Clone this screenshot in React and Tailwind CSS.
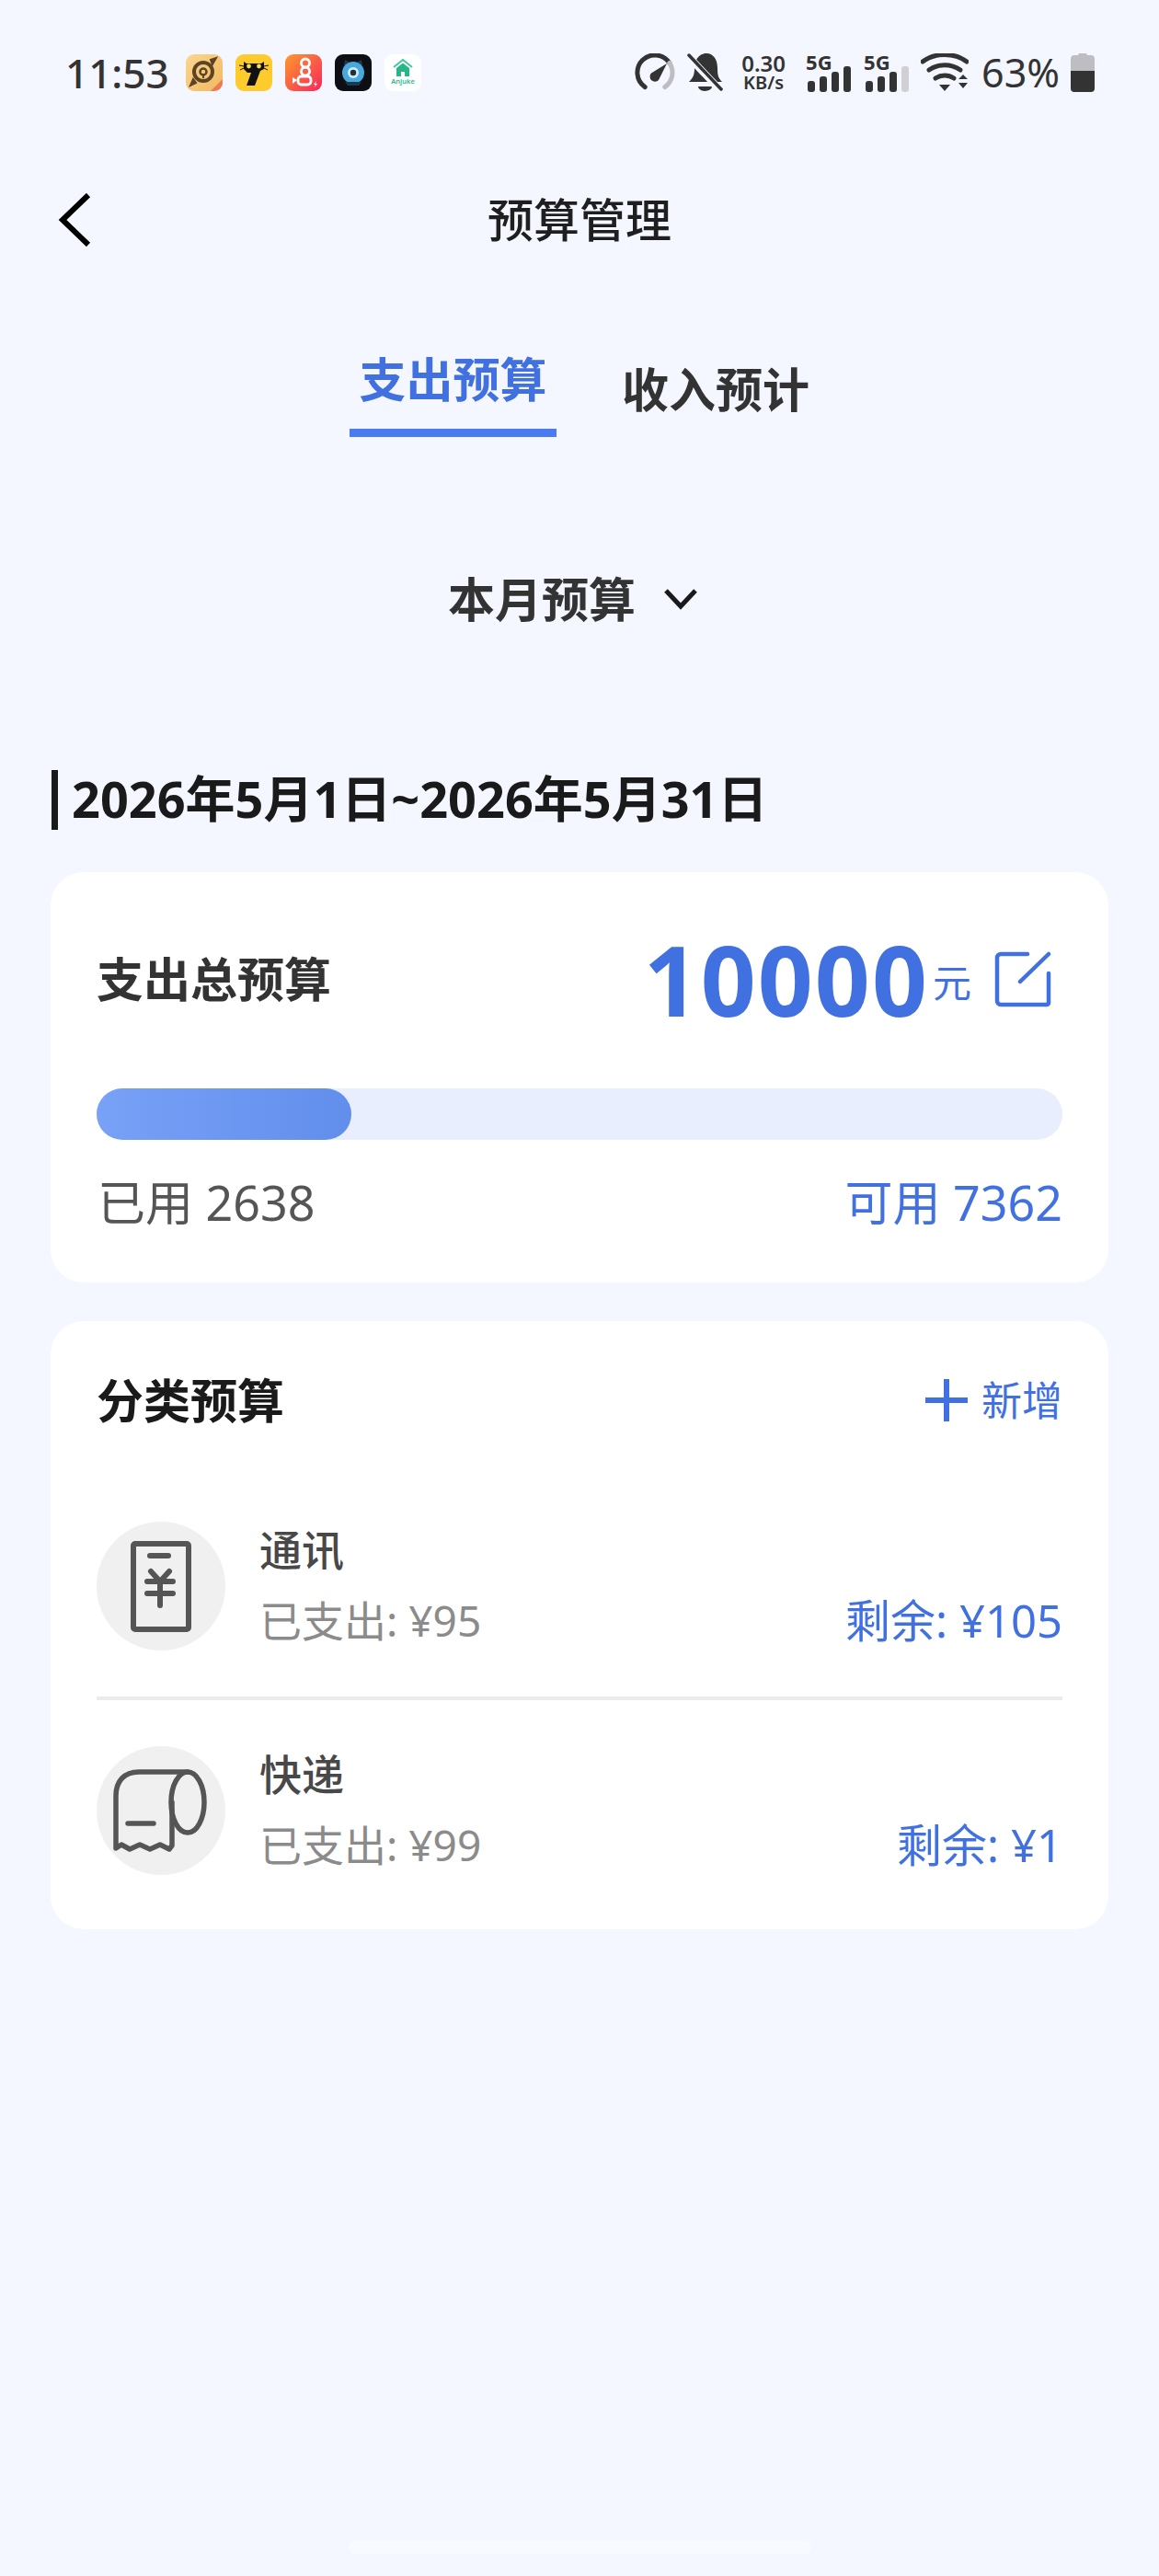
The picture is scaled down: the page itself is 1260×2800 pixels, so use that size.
const BLUE = "#4170e0";

function AppIcons() {
  return (
    <div className="flex items-center gap-[14px]">
      <svg width="40" height="40" viewBox="0 0 40 40">
        <defs>
          <linearGradient id="g1" x1="0" y1="0" x2="1" y2="1">
            <stop offset="0" stopColor="#fbd78f" />
            <stop offset="1" stopColor="#f2b75f" />
          </linearGradient>
        </defs>
        <rect width="40" height="40" rx="9" fill="url(#g1)" />
        <circle cx="19" cy="19" r="10" fill="none" stroke="#5b4526" strokeWidth="4" />
        <circle cx="19" cy="19" r="3.5" fill="none" stroke="#5b4526" strokeWidth="2.5" />
        <path d="M19 21v5M27 6l6-2-4 7zM11 31l-6 3 3-7z" stroke="#5b4526" strokeWidth="2" fill="#5b4526" />
        <path d="M40 27v4a9 9 0 0 1-9 9h-4z" fill="#ee7a55" />
      </svg>
      <svg width="40" height="40" viewBox="0 0 40 40">
        <rect width="40" height="40" rx="9" fill="#fdcb2c" />
        <path d="M9 8l3 2h16l3-2v8l-4 2-6 16h-9l5-14H13l-4-4z" fill="#111" />
        <path d="M9 13L4 12M9 15l-4 2M31 13l5-1M31 15l4 2" stroke="#111" strokeWidth="1" />
        <circle cx="14.500" cy="13" r="2.400" fill="#f7dc5a" />
        <circle cx="25.500" cy="13" r="2.400" fill="#f7dc5a" />
      </svg>
      <svg width="40" height="40" viewBox="0 0 40 40">
        <defs>
          <linearGradient id="g3" x1="0" y1="0" x2="1" y2="1">
            <stop offset="0" stopColor="#fb9a2c" />
            <stop offset="1" stopColor="#f8265c" />
          </linearGradient>
        </defs>
        <rect width="40" height="40" rx="9" fill="url(#g3)" />
        <circle cx="22" cy="9.500" r="4.500" fill="none" stroke="#fff" strokeWidth="2.800" />
        <circle cx="22" cy="18.500" r="4.500" fill="none" stroke="#fff" strokeWidth="2.800" />
        <rect x="14" y="24" width="14" height="9" rx="3.500" fill="none" stroke="#fff" strokeWidth="2.800" />
        <path d="M13 28l-5-3v7z" fill="#fff" />
        <path d="M34 29l-3 4h2l-1 3 3-4h-2z" fill="#fff" />
      </svg>
      <svg width="40" height="40" viewBox="0 0 40 40">
        <rect width="40" height="40" rx="9" fill="#0d0f14" />
        <path d="M10 12l1-6 6 3h6l6-3 1 6z" fill="#1d3a4c" />
        <circle cx="20" cy="20" r="12" fill="#47a9dc" />
        <circle cx="20" cy="20" r="6" fill="#d2ecf7" />
        <circle cx="20" cy="20" r="3.200" fill="#1c2f3d" />
        <path d="M11 30h18l-3 4H14z" fill="#1d3a4c" />
      </svg>
      <div className="w-[40px] h-[40px] rounded-[9px] bg-white flex flex-col items-center pt-[5px]">
        <svg width="22" height="20" viewBox="0 0 22 20">
          <path d="M1 9l10-8 10 8" fill="none" stroke="#3ecb9a" strokeWidth="2" />
          <path d="M4 10l7-5.500 7 5.500v9h-5v-5h-4v5H4z" fill="#25b886" />
        </svg>
        <span className="text-[7.5px] leading-[9px] font-semibold text-[#2bb98a]">Anjuke</span>
      </div>
    </div>
  );
}

function StatusIcons() {
  return (
    <div className="flex items-center text-[#333]">
      <svg width="48" height="42" viewBox="0 0 48 42" fill="none" strokeLinecap="round">
        <path d="M13.200 36.600A19 19 0 1 1 39.800 10.500" stroke="#333" strokeWidth="5" />
        <path d="M39.800 10.500A19 19 0 0 1 34.800 36.600" stroke="#bdbdc2" strokeWidth="5" />
        <path d="M20 21.500L37 11 28 29a5.200 5.200 0 1 1-8-7.500z" fill="#333" />
      </svg>
      <svg className="ml-[11px]" width="40" height="42" viewBox="0 0 40 42">
        <path d="M2 31c4-4 6-7 6-15C8 6 14 0 21 0s12 6 12 16c0 8 1 11 5 15z" fill="#333" />
        <path d="M12 36h15a7.500 5 0 0 1-15 0z" fill="#333" />
        <path d="M1 3l36 38" stroke="#f4f7ff" strokeWidth="8" />
        <path d="M2 2l35 37" stroke="#333" strokeWidth="3.500" strokeLinecap="round" />
      </svg>
      <div className="ml-[16px] w-[54px] flex flex-col items-center font-semibold">
        <span className="text-[24px] leading-[22px]">0.30</span>
        <span className="text-[20px] leading-[20px]">KB/s</span>
      </div>
      <Signal className="ml-[19px]" level={4} />
      <Signal className="ml-[13px]" level={3} />
      <svg className="ml-[12px]" width="52" height="42" viewBox="0 0 52 42" fill="none" stroke="#333" strokeLinecap="round">
        <path d="M2 9C15-1 37-1 50 9" strokeWidth="5" />
        <path d="M9 18c10-7 24-7 34 0" strokeWidth="5" />
        <path d="M16 27c6-4 14-4 20 0" strokeWidth="5" />
        <path d="M20 34h12l-6 7z" fill="#333" stroke="none" />
        <path d="M41 28l5-5 5 5zM41 32h10l-5 6z" fill="#333" stroke="none" />
      </svg>
      <span className="ml-[14px] text-[43px] leading-[42px]">63%</span>
      <div className="ml-[12px] w-[26px] h-[42px] flex flex-col items-center">
        <div className="w-[10px] h-[2px] bg-[#bdbdc2] rounded-t-sm" />
        <div className="w-[26px] h-[17px] bg-[#bdbdc2] rounded-t-[4px]" />
        <div className="w-[26px] h-[23px] bg-[#333] rounded-b-[4px]" />
      </div>
    </div>
  );
}

function Signal({ level, className }) {
  const bars = [12, 17, 22, 28];
  return (
    <div className={`relative w-[50px] h-[42px] pl-[2px] flex items-end gap-[5px] ${className}`}>
      <span className="absolute left-0 top-[-3px] text-[22px] leading-[24px] font-bold">5G</span>
      {bars.map((h, i) => (
        <div
          key={i}
          className={`w-[8px] rounded-[3px] ${i < level ? "bg-[#333]" : "bg-[#d0d0d4]"}`}
          style={{ height: h }}
        />
      ))}
    </div>
  );
}

function PhoneBillIcon() {
  return (
    <svg width="66" height="99" viewBox="0 0 66 99" fill="none" stroke="#555" strokeWidth="6" strokeLinecap="round" strokeLinejoin="round">
      <rect x="3" y="3" width="60" height="93" rx="2" />
      <path d="M21 16h20M22 33l10 11 10-11M18 44h28M18 57h28M32 44v26" />
    </svg>
  );
}

function RollIcon() {
  return (
    <svg width="104" height="92" viewBox="0 0 104 92" fill="none" stroke="#555" strokeWidth="5.500" strokeLinecap="round" strokeLinejoin="round">
      <ellipse cx="81" cy="37" rx="18" ry="33" />
      <path d="M81 4H28C12 4 3 14 3 30v57l6-4 9 5 11-5 11 5 11-5 10 5 3-4V37" />
      <path d="M16 60h28" />
    </svg>
  );
}

function CategoryRow({ icon, name, spent, left }) {
  return (
    <div className="flex items-center h-[140px]">
      <div className="w-[140px] h-[140px] rounded-full bg-[#f0f0f0] flex items-center justify-center">{icon}</div>
      <div className="ml-[37px] -mt-[3px] flex-1 flex flex-col">
        <span className="text-[46px] leading-[60px] font-medium text-[#484848]">{name}</span>
        <div className="flex justify-between items-center mt-[17px] leading-[60px]">
          <span className="text-[46px] text-[#8b8b8b]">已支出: {spent}</span>
          <span className="text-[49px]" style={{ color: BLUE }}>剩余: {left}</span>
        </div>
      </div>
    </div>
  );
}

export default function App() {
  return (
    <div className="w-[1260px] h-[2800px] bg-[#f4f7ff] font-['Noto_Sans','Noto_Sans_CJK_SC',sans-serif] flex flex-col overflow-hidden">
      {/* status bar */}
      <div className="flex items-center justify-between h-[42px] mt-[58px] pl-[71px] pr-[70px]">
        <div className="flex items-center">
          <span className="w-[131px] text-[44px] leading-[42px] font-medium text-[#333]">11:53</span>
          <AppIcons />
        </div>
        <StatusIcons />
      </div>

      {/* title */}
      <div className="grid grid-cols-[1fr_auto_1fr] items-center mt-[110px] pl-[63px] h-[58px]">
        <svg width="36" height="58" viewBox="0 0 36 58" fill="none" stroke="#000" strokeWidth="6">
          <path d="M33 2L5 29l28 27" />
        </svg>
        <span className="text-[50px] leading-[58px] font-medium text-[#1f1f1f] -ml-[63px]">预算管理</span>
        <span />
      </div>

      {/* tabs */}
      <div className="flex items-start mt-[115px] pl-[380px] h-[82px]">
        <div className="w-[225px] flex flex-col items-center">
          <span className="text-[51px] leading-[58px] font-bold" style={{ color: BLUE }}>支出预算</span>
          <div className="w-[225px] h-[9px] mt-[25px] bg-[#4b7bf0]" />
        </div>
        <span className="ml-[71px] mt-[11px] text-[51px] leading-[58px] font-bold text-[#333]">收入预计</span>
      </div>

      {/* period */}
      <div className="flex items-center mt-[157px] pl-[487px] h-[58px]">
        <span className="text-[51px] leading-[58px] font-bold text-[#333]">本月预算</span>
        <svg className="ml-[30px]" width="38" height="26" viewBox="0 0 38 26" fill="none" stroke="#1a1a1a" strokeWidth="5">
          <path d="M3 4l16 17L35 4" />
        </svg>
      </div>

      {/* date range */}
      <div className="flex items-center mt-[157px] ml-[56px] h-[65px]">
        <div className="w-[7px] h-[65px] bg-[#1a1a1a]" />
        <span className="ml-[15px] -mt-[3px] text-[54px] leading-[58px] font-bold text-[#1a1a1a]">2026年5月1日~2026年5月31日</span>
      </div>

      {/* total budget */}
      <div className="mt-[46px] mx-[55px] h-[446px] bg-white rounded-[36px] px-[50px] flex flex-col">
        <div className="flex items-center justify-between mt-[72px] h-[90px]">
          <span className="-mt-[3px] text-[51px] leading-[58px] font-bold text-[#333]">支出总预算</span>
          <div className="flex items-center pr-[12px]">
            <span className="text-[105px] leading-[90px] font-bold tracking-[2px]" style={{ color: BLUE }}>10000</span>
            <span className="ml-[4px] mt-[6px] text-[42px] leading-[50px]" style={{ color: BLUE }}>元</span>
            <svg className="ml-[25px]" width="62" height="62" viewBox="0 0 62 62" fill="none" stroke="#4170e0" strokeWidth="4.500" strokeLinecap="round">
              <path d="M36 3H7a4 4 0 0 0-4 4v47a4 4 0 0 0 4 4h50a2 2 0 0 0 2-2V24" />
              <path d="M59 3L28 33" />
            </svg>
          </div>
        </div>
        <div className="mt-[73px] h-[56px] rounded-full bg-[#e8eefd]">
          <div className="w-[277px] h-[56px] rounded-full bg-gradient-to-r from-[#78a1f7] to-[#628eec]" />
        </div>
        <div className="flex justify-between mt-[38px] text-[52px] leading-[60px] pl-[1px]">
          <span className="text-[#555]">已用 2638</span>
          <span style={{ color: BLUE }}>可用 7362</span>
        </div>
      </div>

      {/* categories */}
      <div className="mt-[42px] mx-[55px] h-[661px] bg-white rounded-[36px] px-[50px] flex flex-col">
        <div className="flex items-center justify-between mt-[57px] h-[58px]">
          <span className="text-[51px] leading-[58px] font-bold text-[#1a1a1a]">分类预算</span>
          <div className="flex items-center">
            <svg width="46" height="46" viewBox="0 0 46 46" stroke="#4170e0" strokeWidth="6">
              <path d="M0 23h46M23 0v46" />
            </svg>
            <span className="ml-[15px] text-[44px] leading-[58px]" style={{ color: BLUE }}>新增</span>
          </div>
        </div>
        <div className="mt-[103px]">
          <CategoryRow icon={<PhoneBillIcon />} name="通讯" spent="¥95" left="¥105" />
        </div>
        <div className="mt-[50px] h-[4px] bg-[#ebebeb]" />
        <div className="mt-[50px]">
          <CategoryRow icon={<RollIcon />} name="快递" spent="¥99" left="¥1" />
        </div>
      </div>

      {/* home indicator */}
      <div className="mt-[664px] mx-auto w-[503px] h-[15px] rounded-full bg-[#f9fafe]" />
    </div>
  );
}
